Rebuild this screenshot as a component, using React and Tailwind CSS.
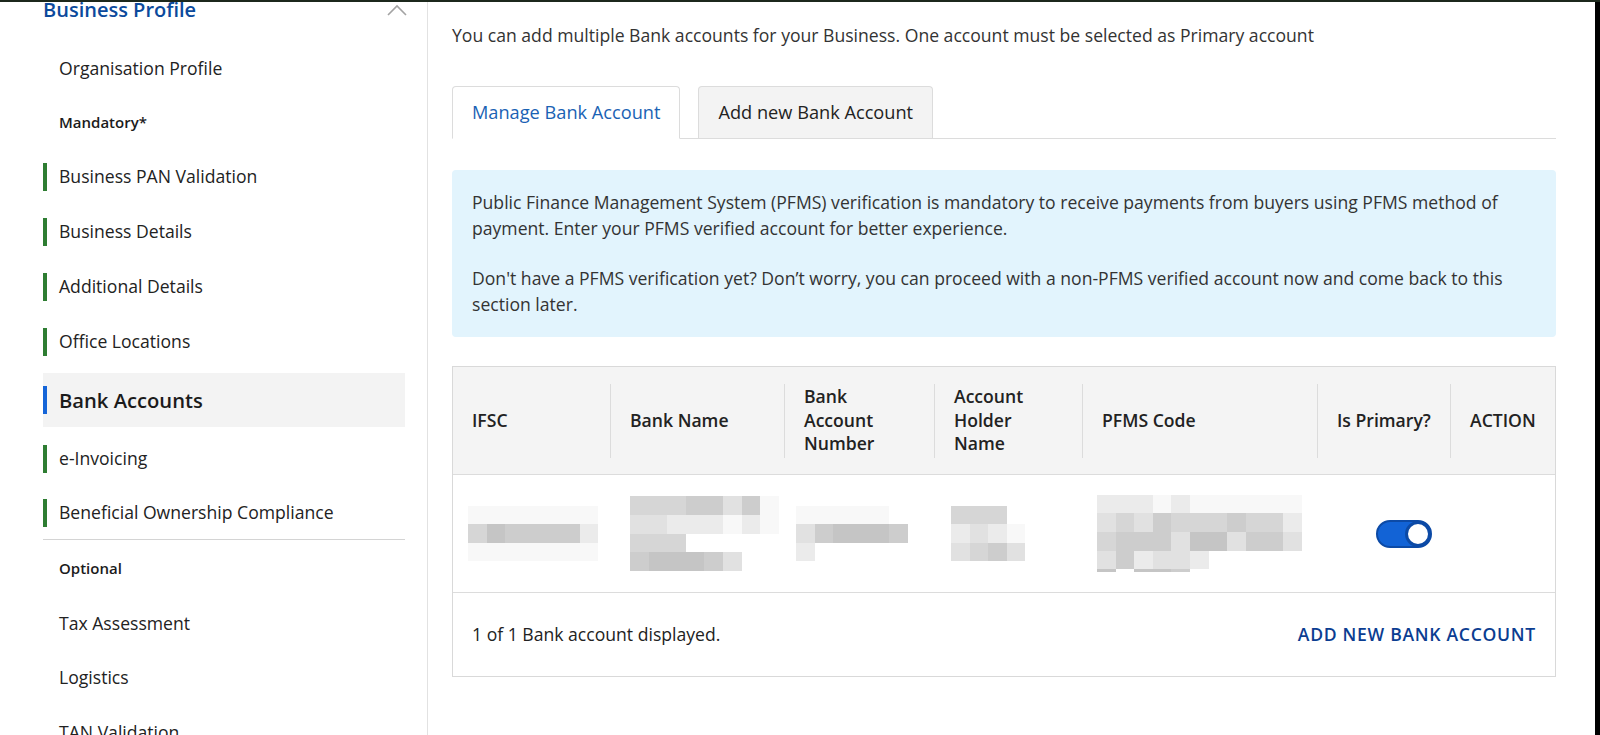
import React from 'react';

const shade = {
  a: 'bg-[#c5c5c5]',
  b: 'bg-[#cdcdcd]',
  c: 'bg-[#d6d6d6]',
  d: 'bg-[#e1e1e1]',
  e: 'bg-[#ebebeb]',
  f: 'bg-[#f8f8f8]',
  '.': 'bg-transparent',
};

// blurred (pixelated) values, one string per row of blocks
const Pixelated = ({ rows, tail }) => (
  <div className="flex flex-col">
    {rows.map((row, i) => (
      <div key={i} className="flex">
        {row.split('').map((ch, j) => (
          <div key={j} className={`w-[18.6px] h-[18.6px] ${shade[ch]}`} />
        ))}
      </div>
    ))}
    {tail && (
      <div className="flex">
        {tail.split('').map((ch, j) => (
          <div key={j} className={`w-[18.6px] h-[3px] ${shade[ch]}`} />
        ))}
      </div>
    )}
  </div>
);

const NavItem = ({ label, bar, active, className = 'h-[55px]' }) => (
  <div className={`flex items-center ${className} ${active ? 'bg-[#f3f3f3]' : ''}`}>
    <div
      className={`w-[4px] shrink-0 ${
        bar === 'green' ? 'h-[28px] bg-[#2e7d32]' : bar === 'blue' ? 'h-[28px] bg-[#1565d8]' : 'h-[28px]'
      }`}
    />
    <span
      className={`pl-[12px] ${
        active ? 'text-[20.2px] font-semibold text-[#1b1b1b]' : 'text-[17.6px] text-[#222]'
      }`}
    >
      {label}
    </span>
  </div>
);

const GroupLabel = ({ children, className }) => (
  <div className={`flex items-center pl-[16px] text-[15px] font-semibold text-[#1b1b1b] ${className}`}>
    {children}
  </div>
);

const cols = 'grid grid-cols-[157px_174px_150px_148px_235px_133px_1fr]';

const HeadCell = ({ children, first }) => (
  <div className="flex items-center h-full">
    {!first && <div className="w-px h-[74px] bg-[#dcdcdc] shrink-0" />}
    <div className="pl-[19px] text-[17.6px] leading-[23.5px] font-semibold text-[#222]">{children}</div>
  </div>
);

export default function App() {
  return (
    <div className="w-[1600px] h-[735px] overflow-hidden bg-white border-t-2 border-[#1c281c] flex font-['Open_Sans','Liberation_Sans',sans-serif]">
      {/* Sidebar */}
      <aside className="w-[428px] shrink-0 border-r border-[#e2e2e2] pl-[43px] pr-[22px]">
        <div className="-mt-[12px] h-[40px] flex items-center justify-between">
          <span className="text-[20px] font-semibold text-[#0b4a9c]">Business Profile</span>
          <svg width="20" height="12" viewBox="0 0 20 12" className="mr-[-2px]">
            <polyline points="1,11 10,2 19,11" fill="none" stroke="#a3a3a3" strokeWidth="1.6" />
          </svg>
        </div>
        <NavItem label="Organisation Profile" className="h-[55px] mt-[11px]" />
        <GroupLabel className="h-[53px]">Mandatory*</GroupLabel>
        <NavItem label="Business PAN Validation" bar="green" />
        <NavItem label="Business Details" bar="green" />
        <NavItem label="Additional Details" bar="green" />
        <NavItem label="Office Locations" bar="green" />
        <NavItem label="Bank Accounts" bar="blue" active className="h-[54px] mt-[4px]" />
        <NavItem label="e-Invoicing" bar="green" className="h-[55px] mt-[4px]" />
        <NavItem label="Beneficial Ownership Compliance" bar="green" className="h-[54px] border-b border-[#d4d4d4]" />
        <GroupLabel className="h-[56px]">Optional</GroupLabel>
        <NavItem label="Tax Assessment" className="h-[54px]" />
        <NavItem label="Logistics" />
        <NavItem label="TAN Validation" />
      </aside>

      {/* Main content */}
      <main className="flex-1 pl-[24px] pr-[39px] text-[#333]">
        <p className="mt-[21px] text-[17.6px] leading-[24px]">
          You can add multiple Bank accounts for your Business. One account must be selected as Primary account
        </p>

        {/* Tabs */}
        <div className="mt-[39px] flex items-end gap-[18px] border-b border-[#dcdcdc]">
          <div className="-mb-px h-[53px] px-[19px] flex items-center bg-white border border-[#dcdcdc] border-b-white rounded-t-[4px] text-[18.2px] text-[#1a62b4]">
            Manage Bank Account
          </div>
          <div className="h-[52px] px-[19px] flex items-center bg-[#f3f3f3] border border-b-0 border-[#dcdcdc] rounded-t-[4px] text-[18.2px] text-[#222]">
            Add new Bank Account
          </div>
        </div>

        {/* Info */}
        <div className="mt-[31px] rounded-[4px] bg-[#e2f4fd] px-[20px] py-[20px] text-[17.6px] leading-[25.5px] text-[#333]">
          <p>
            Public Finance Management System (PFMS) verification is mandatory to receive payments from buyers using PFMS method of
            <br />
            payment. Enter your PFMS verified account for better experience.
          </p>
          <p className="mt-[25px]">
            Don't have a PFMS verification yet? Don’t worry, you can proceed with a non-PFMS verified account now and come back to this
            <br />
            section later.
          </p>
        </div>

        {/* Table */}
        <div className="mt-[29px] border border-[#d9d9d9]">
          <div className={`${cols} h-[108px] bg-[#f4f4f4] border-b border-[#dcdcdc]`}>
            <HeadCell first>IFSC</HeadCell>
            <HeadCell>Bank Name</HeadCell>
            <HeadCell>
              Bank
              <br />
              Account
              <br />
              Number
            </HeadCell>
            <HeadCell>
              Account
              <br />
              Holder
              <br />
              Name
            </HeadCell>
            <HeadCell>PFMS Code</HeadCell>
            <HeadCell>Is Primary?</HeadCell>
            <HeadCell>ACTION</HeadCell>
          </div>

          <div className={`${cols} h-[118px] items-center border-b border-[#dcdcdc]`}>
            <div className="pl-[15px]">
              <Pixelated rows={['fffffff', 'cabbbbe', 'fffffff']} />
            </div>
            <div className="pl-[20px]">
              <Pixelated rows={['cccbbdbf', 'ddeeefef', 'ccc.....', 'baaabd..']} />
            </div>
            <div className="pl-[12px]">
              <Pixelated rows={['fffff.', 'dbaaab', 'e.....']} />
            </div>
            <div className="pl-[17px]">
              <Pixelated rows={['ccc.', 'edef', 'dcbd']} />
            </div>
            <div className="pl-[15px]">
              <Pixelated
                rows={['eeefeffffff', 'dcdbcccbcce', 'cbbbdaadbbd', 'dbedde.....']}
                tail="a.aab......"
              />
            </div>
            <div className="pl-[59px] pt-[1px]">
              <div className="w-[56px] h-[28px] rounded-full bg-[#1263d6] border-2 border-[#0c4aa6] flex items-center justify-end">
                <div className="w-[26px] h-[26px] rounded-full bg-white border-[3px] border-[#0c4aa6] -mr-px" />
              </div>
            </div>
            <div />
          </div>

          <div className="h-[83px] px-[19px] flex items-center justify-between">
            <span className="text-[17.6px] text-[#222]">1 of 1 Bank account displayed.</span>
            <span className="text-[17.6px] font-semibold tracking-[0.7px] text-[#0b3d91]">ADD NEW BANK ACCOUNT</span>
          </div>
        </div>
      </main>

      <div className="w-[5px] shrink-0 bg-black" />
    </div>
  );
}
